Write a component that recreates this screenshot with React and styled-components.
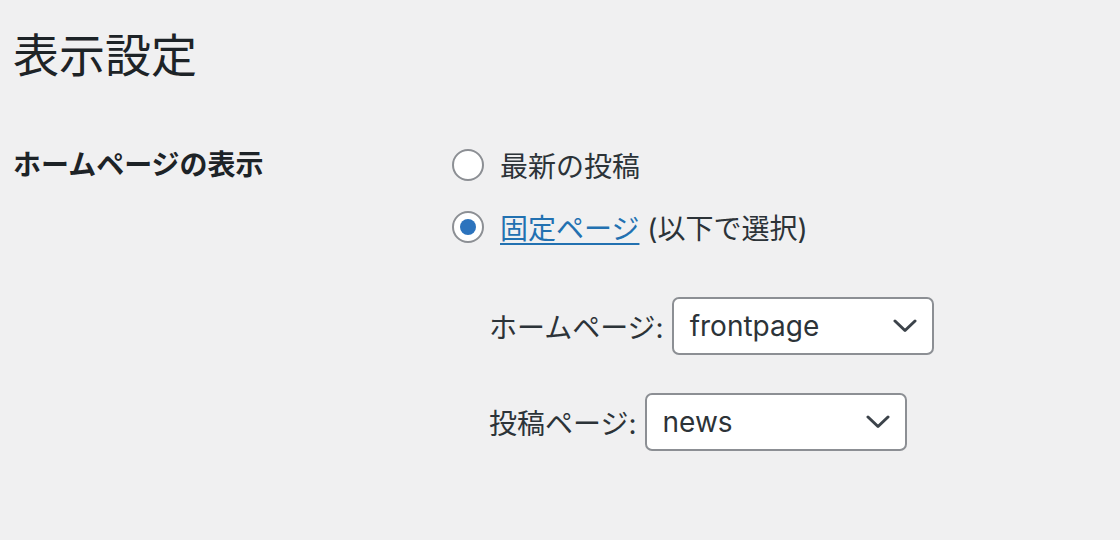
import styled, { createGlobalStyle } from "styled-components";

const GlobalStyle = createGlobalStyle`
  html, body {
    margin: 0;
    padding: 0;
    background: #f0f0f1;
  }
  body {
    font-family: Inter, "Noto Sans CJK JP", sans-serif;
    color: #1d2327;
  }
`;

const Wrap = styled.div`
  width: 1120px;
  height: 540px;
  box-sizing: border-box;
  padding: 25px 0 0 13px;
  overflow: hidden;
`;

const Title = styled.h1`
  margin: 0;
  font-size: 46px;
  font-weight: 400;
  line-height: 60px;
  color: #1d2327;
`;

const FormTable = styled.div`
  display: grid;
  grid-template-columns: 439px 1fr;
  margin-top: 58px;
`;

const RowLabel = styled.div`
  font-size: 28px;
  font-weight: 700;
  line-height: 44px;
  color: #1d2327;
`;

const Field = styled.div`
  display: flex;
  flex-direction: column;
`;

const RadioList = styled.div`
  display: flex;
  flex-direction: column;
  gap: 18px;
`;

const RadioRow = styled.label`
  display: flex;
  align-items: center;
  gap: 16px;
  height: 44px;
  font-size: 28px;
  color: #2c3338;
`;

const Radio = styled.span`
  box-sizing: border-box;
  width: 32px;
  height: 32px;
  border-radius: 50%;
  border: 2px solid #8c8f94;
  background: #fff;
  display: flex;
  align-items: center;
  justify-content: center;
  flex-shrink: 0;

  &::before {
    content: "";
    display: ${(p) => (p.checked ? "block" : "none")};
    width: 16px;
    height: 16px;
    border-radius: 50%;
    background: #2c73bd;
  }
`;

const PageLink = styled.a`
  color: #2271b1;
  text-decoration: underline;
  text-underline-offset: 4px;
  text-decoration-thickness: 2px;
`;

const SubList = styled.div`
  display: flex;
  flex-direction: column;
  gap: 38px;
  margin-top: 48px;
  padding-left: 37px;
`;

const SubRow = styled.div`
  display: flex;
  align-items: center;
  gap: 8px;
  font-size: 28px;
  color: #2c3338;
`;

const Select = styled.div`
  box-sizing: border-box;
  width: 262px;
  height: 58px;
  border: 2px solid #8c8f94;
  border-radius: 7px;
  background: #fff;
  display: flex;
  align-items: center;
  justify-content: space-between;
  padding: 0 15px 0 16px;
  font-size: 28px;
  color: #2c3338;
`;

const Chevron = () => (
  <svg width="24" height="14" viewBox="0 0 24 14" fill="none">
    <path d="M2 2l10 9.5L22 2" stroke="#3c434a" strokeWidth="3" strokeLinecap="round" strokeLinejoin="round" />
  </svg>
);

export default function App() {
  return (
    <Wrap>
      <GlobalStyle />
      <Title>表示設定</Title>
      <FormTable>
        <RowLabel>ホームページの表示</RowLabel>
        <Field>
          <RadioList>
            <RadioRow>
              <Radio />
              <span>最新の投稿</span>
            </RadioRow>
            <RadioRow>
              <Radio checked />
              <span>
                <PageLink href="#">固定ページ</PageLink> (以下で選択)
              </span>
            </RadioRow>
          </RadioList>
          <SubList>
            <SubRow>
              <span>ホームページ:</span>
              <Select>
                <span>frontpage</span>
                <Chevron />
              </Select>
            </SubRow>
            <SubRow>
              <span>投稿ページ:</span>
              <Select>
                <span>news</span>
                <Chevron />
              </Select>
            </SubRow>
          </SubList>
        </Field>
      </FormTable>
    </Wrap>
  );
}
